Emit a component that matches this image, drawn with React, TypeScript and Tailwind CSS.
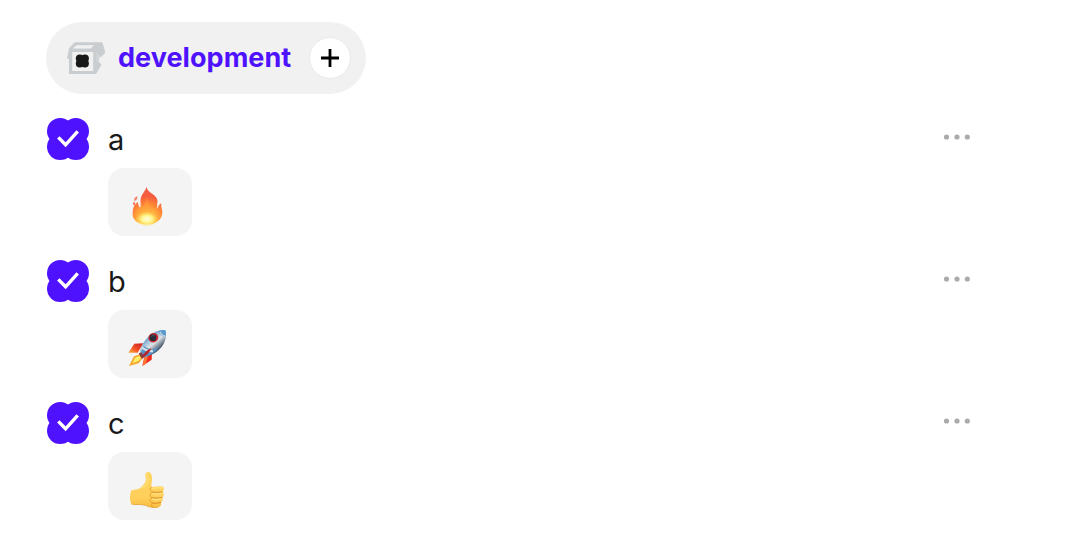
import { ReactNode } from 'react';

interface Task {
  label: string;
  icon: ReactNode;
}

const BoxIcon = () => (
  <svg aria-hidden="true" className="h-[36px] w-[40px] shrink-0" viewBox="66 40 40 36">
    <path
      d="M74.7 42.2H102.3L105.4 52.4L100.7 57.5L99.6 55V61L101.4 65L96 74H69V58.8H67L69 48.3Z"
      fill="#c9cdcf"
    />
    <path d="M72.6 48.4L76.6 45.2H93.8L90.8 48.4ZM72.2 52.1H93.2V71H72.2Z" fill="#f1f1f1" />
    <path d="M96.4 51.5L98.4 54.6L99.6 57.5L96.4 62.5Z" fill="#d3d6d8" />
    <path d="M99.4 58.4L101.4 57V64.2L98.4 61.5Z" fill="#f1f1f1" />
    <g fill="#191919">
      <circle cx="79.8" cy="58.4" r="4" />
      <circle cx="84.9" cy="58.4" r="4" />
      <circle cx="79.8" cy="63.4" r="4" />
      <circle cx="84.9" cy="63.4" r="4" />
    </g>
  </svg>
);

const CheckIcon = () => (
  <svg aria-hidden="true" className="size-[42px]" viewBox="0 0 42 42">
    <g fill="#4f12ff">
      <circle cx="13.2" cy="13.2" r="13.2" />
      <circle cx="28.8" cy="13.2" r="13.2" />
      <circle cx="13.2" cy="28.8" r="13.2" />
      <circle cx="28.8" cy="28.8" r="13.2" />
    </g>
    <path d="M11.3 19.4L18.6 26.8L30.7 13.3" fill="none" stroke="white" strokeWidth="3.4" />
  </svg>
);

const DotsIcon = () => (
  <svg aria-hidden="true" className="h-[6px] w-[28px]" fill="#ababab" viewBox="0 0 28 6">
    <circle cx="3.5" cy="3" r="2.6" />
    <circle cx="14" cy="3" r="2.6" />
    <circle cx="24.3" cy="3" r="2.6" />
  </svg>
);

const FireIcon = () => (
  <svg aria-hidden="true" className="h-[50px] w-[54px]" viewBox="0 0 162 150">
    <defs>
      <radialGradient cx="82" cy="119" gradientUnits="userSpaceOnUse" id="flame" r="98">
        <stop offset="0" stopColor="#ffef75" />
        <stop offset=".22" stopColor="#ffc746" />
        <stop offset=".45" stopColor="#ff8d36" />
        <stop offset=".72" stopColor="#f65a3d" />
        <stop offset="1" stopColor="#ef6350" />
      </radialGradient>
      <radialGradient id="flame-core">
        <stop offset="0" stopColor="#fffce0" />
        <stop offset=".5" stopColor="#fff388" />
        <stop offset="1" stopColor="#ffd84d" stopOpacity="0" />
      </radialGradient>
    </defs>
    <path
      d="M79 20C78 31 65 41 62 56C60 66 64 76 61 83C56 80 55 73 53 66C43 73 38 84 38 98C36 118 51 133 80 133C107 133 126 120 127 98C128 88 122 82 124 70C116 73 115 80 113 86C109 78 115 67 111 57C105 41 83 38 79 20Z"
      fill="url(#flame)"
    />
    <path d="M52 49C43 52 41 58 44 64C49 61 53 56 52 49ZM42 65C37 69 39 74 43 77C47 73 46 68 42 65Z" fill="#f4775e" />
    <path
      d="M80 51C82 66 67 75 68 91C60 90 58 84 56 80C48 94 46 111 57 122C67 133 98 133 109 119C116 109 114 97 109 92C106 97 102 99 98 99C100 83 88 77 80 51Z"
      fill="#ffa23d"
      opacity=".5"
    />
    <ellipse cx="81" cy="117" fill="url(#flame-core)" rx="34" ry="23" />
  </svg>
);

const RocketIcon = () => (
  <svg aria-hidden="true" className="h-[50px] w-[54px]" viewBox="0 0 162 150">
    <defs>
      <linearGradient gradientUnits="userSpaceOnUse" id="hull" x1="82" x2="114" y1="45" y2="82">
        <stop offset="0" stopColor="#609bcb" />
        <stop offset=".3" stopColor="#a9c6da" />
        <stop offset=".55" stopColor="#dfe3e5" />
        <stop offset="1" stopColor="#4c5e70" />
      </linearGradient>
      <linearGradient id="fin" x1="0" x2="1" y1="1" y2="0">
        <stop offset="0" stopColor="#ffb23b" />
        <stop offset=".45" stopColor="#f14e26" />
        <stop offset="1" stopColor="#c81b20" />
      </linearGradient>
    </defs>
    <path d="M70 64L43 65L25 92L53 92Z" fill="url(#fin)" />
    <path d="M96 91L95 113L67 132L73 105Z" fill="#ee281f" />
    <path d="M85 100L77 126L68 131L73 106Z" fill="#ff7635" />
    <path
      d="M134 24C118 23 101 29 87 42C73 55 65 71 60 86C59 94 69 105 77 105C93 101 112 91 124 76C136 62 140 42 137 27Q136 24 134 24Z"
      fill="url(#hull)"
    />
    <path d="M134 24C128 23 121 25 114 27C118 36 127 45 136 46C138 39 139 31 137 27Q136 24 134 24Z" fill="#599bd0" />
    <path d="M120 29C123 36 130 42 136 43" fill="none" stroke="#cad8e1" strokeWidth="4" />
    <path d="M72 72C78 77 87 80 95 83L117 75L107 87C98 95 87 101 77 105L62 91Z" fill="#5592c6" />
    <path d="M66 77C74 83 84 88 99 88" fill="none" stroke="#d6dfe6" strokeWidth="6" />
    <path d="M60 97L42 103L27 132L56 124L69 107Z" fill="#f7a82b" />
    <path d="M57 102L45 108L37 124L55 117L63 108Z" fill="#fff16b" />
    <path d="M56 94L64 91L74 104L66 111Z" fill="#7b4146" />
    <path d="M94 79C82 83 71 93 65 106C78 103 87 94 94 79Z" fill="#b92329" />
    <ellipse cx="100" cy="47" fill="#cd2735" rx="15" ry="14" transform="rotate(-20 100 47)" />
    <circle cx="99" cy="47" fill="#272b36" r="10" />
    <path d="M94 43Q98 39 103 42" fill="none" stroke="#66788a" strokeWidth="2" />
  </svg>
);

const ThumbIcon = () => (
  <svg aria-hidden="true" className="h-[50px] w-[54px]" viewBox="0 0 162 150">
    <defs>
      <linearGradient id="hand" x1="0" x2="0" y1="0" y2="1">
        <stop offset="0" stopColor="#ffd461" />
        <stop offset=".7" stopColor="#ffd05b" />
        <stop offset="1" stopColor="#f7bd41" />
      </linearGradient>
    </defs>
    <path
      d="M83 24C90 23 95 29 96 38C97 49 94 58 94 69C104 68 114 66 125 67C132 68 134 77 128 83C133 87 133 95 127 100C130 105 128 111 123 115C126 125 119 131 108 131C96 132 86 129 76 124C63 121 48 124 35 121C28 112 29 91 34 79C42 76 51 77 57 74C67 67 76 58 78 47C77 37 72 28 83 24Z"
      fill="url(#hand)"
    />
    <path d="M95 69C88 73 89 82 97 84C88 88 89 98 96 101C88 105 89 114 97 117C91 121 94 128 101 130" fill="none" stroke="#e3972b" strokeWidth="2.5" />
    <path d="M96 84C107 86 119 85 128 83M95 101C107 103 118 102 127 100M96 117C105 119 115 118 123 115" fill="none" stroke="#dc8f29" strokeWidth="3" />
    <path d="M98 73C108 71 119 70 125 72M98 89C109 91 120 90 127 88M97 106C107 108 117 107 123 105" fill="none" stroke="#ffe180" strokeLinecap="round" strokeWidth="4" />
    <path d="M34 120C48 123 63 120 76 124C87 129 98 132 113 130" fill="none" stroke="#de9b2e" strokeWidth="2" />
    <path d="M83 28C80 30 82 37 84 45C83 57 75 67 66 72" fill="none" stroke="#ffdf77" strokeLinecap="round" strokeWidth="4" />
  </svg>
);

const tasks: Task[] = [
  { label: 'a', icon: <FireIcon /> },
  { label: 'b', icon: <RocketIcon /> },
  { label: 'c', icon: <ThumbIcon /> },
];

const TaskRow = ({ label, icon }: Task) => (
  <li className="flex h-[142px] items-start">
    <button aria-label="Done" className="mr-[19px] ml-px">
      <CheckIcon />
    </button>
    <div className="flex-1">
      <p className="h-[50px] text-[29px] leading-[44px] text-[#191919]">{label}</p>
      <div className="flex h-[68px] w-[84px] items-center rounded-2xl bg-[#f4f4f4] pt-[6px] pl-3">{icon}</div>
    </div>
    <button aria-label="More" className="mt-4">
      <DotsIcon />
    </button>
  </li>
);

export default function App() {
  return (
    <main className="h-[550px] overflow-hidden bg-white pt-[22px] pr-[99px] pl-[46px] font-['Inter',sans-serif]">
      <header className="flex h-[72px] w-[320px] items-center rounded-full bg-[#f1f1f1] pr-[15px] pl-5">
        <BoxIcon />
        <h1 className="ml-3 text-[27px] leading-[40px] font-bold tracking-[0.05px] text-[#4f12ff]">development</h1>
        <button
          aria-label="Add"
          className="ml-auto flex size-[42px] shrink-0 items-center justify-center rounded-full border border-[#e9e9e9] bg-white"
        >
          <svg className="size-[18px]" fill="none" stroke="black" strokeWidth="2.8" viewBox="0 0 18 18">
            <path d="M9 0V18M0 9H18" />
          </svg>
        </button>
      </header>
      <ul className="mt-6">
        {tasks.map((task) => (
          <TaskRow icon={task.icon} key={task.label} label={task.label} />
        ))}
      </ul>
    </main>
  );
}
